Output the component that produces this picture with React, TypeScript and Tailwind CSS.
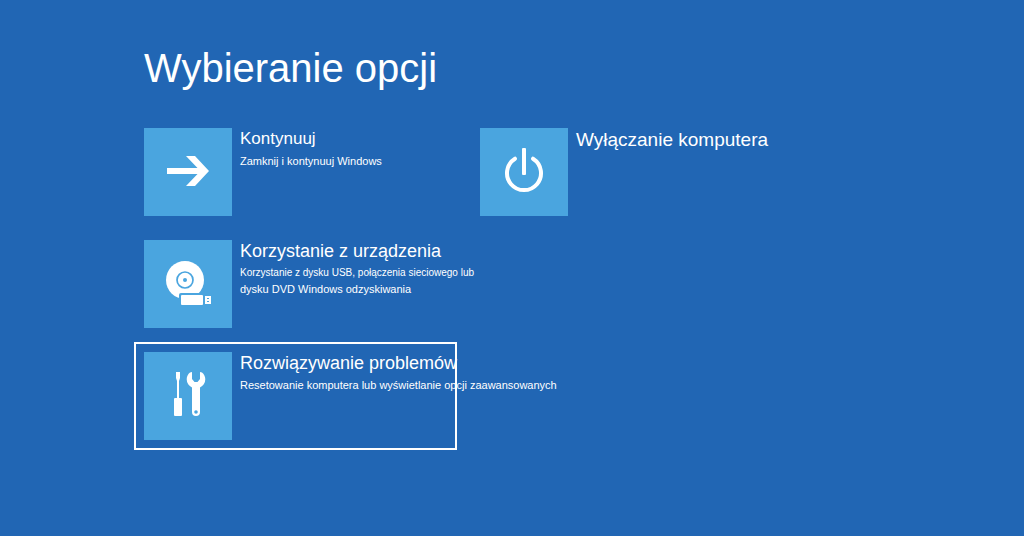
import type { ReactNode } from 'react';
import clsx from 'clsx';

const ArrowIcon = () => (
  <svg viewBox="0 0 88 88" className="size-full" fill="#fff" aria-hidden="true">
    <path d="M42 28h9l14 15-14 15h-9l11.5-12H23v-6h30.5z" />
  </svg>
);

const DeviceIcon = () => (
  <svg viewBox="0 0 88 88" className="size-full" aria-hidden="true">
    <circle cx="41" cy="40" r="19" fill="#fff" />
    <circle cx="41" cy="40" r="8" fill="none" stroke="#4aa5df" strokeWidth="1.7" />
    <circle cx="41" cy="40" r="2" fill="#4aa5df" />
    <path d="M37 53h24v14H35V55a2 2 0 0 1 2-2z" fill="#4aa5df" />
    <rect x="37" y="55" width="22" height="10" rx="1" fill="#fff" />
    <path d="M61 56h6v8h-6z" fill="#fff" />
    <path d="M63 58h2v1h-2zM63 61h2v1h-2z" fill="#4aa5df" />
  </svg>
);

const ToolsIcon = () => (
  <svg viewBox="0 0 88 88" className="size-full" fill="#fff" aria-hidden="true">
    <path d="M32 20h4v6l-1 3v17h-2V29l-1-3z" />
    <rect x="30" y="46" width="8" height="18" rx="1" />
    <path
      fillRule="evenodd"
      d="M46 20.500l2-.5v7l2.500 3h3l2.500-3v-7l2 .5c2 1.500 3.300 4 3.300 6.700 0 3.800-2.200 6.700-5.300 8.300V60a4 4 0 0 1-8 0V35.500c-3.100-1.600-5.300-4.500-5.300-8.300 0-2.700 1.300-5.200 3.300-6.700zM52 58.200a1.800 1.800 0 1 0 0 3.600 1.800 1.800 0 0 0 0-3.600z"
    />
  </svg>
);

const PowerIcon = () => (
  <svg viewBox="0 0 88 88" className="size-full" fill="none" stroke="#fff" strokeWidth="4" aria-hidden="true">
    <path strokeLinecap="round" d="M35 30.700a17 17 0 1 0 18 0" />
    <rect x="42" y="20" width="4" height="27" rx="1" fill="#fff" stroke="none" />
  </svg>
);

type OptionProps = {
  icon: ReactNode;
  title: string;
  titleClass: string;
  selected?: boolean;
  children?: ReactNode;
};

const Option = ({ icon, title, titleClass, selected, children }: OptionProps) => (
  <button
    type="button"
    className={clsx(
      'flex w-[303px] items-start gap-2 text-left',
      selected ? 'outline-2 outline-offset-8 outline-white' : 'outline-none'
    )}
  >
    <span className="size-[88px] shrink-0 bg-[#4aa5df]">{icon}</span>
    <span className="flex flex-col whitespace-nowrap">
      <span className={titleClass}>{title}</span>
      {children && <span className="mt-[3px] flex flex-col text-[11px] leading-4">{children}</span>}
    </span>
  </button>
);

const App = () => {
  return (
    <main className="min-h-screen bg-[#2166b4] px-36 pt-11 pb-24 font-['Liberation_Sans',Arial,sans-serif] text-white">
      <h1 className="text-[40px] leading-[48px]">Wybieranie opcji</h1>

      <div className="mt-9 flex flex-wrap items-start gap-x-[33px] gap-y-6">
        <div className="flex flex-col gap-6">
          <Option icon={<ArrowIcon />} title="Kontynuuj" titleClass="text-[17px] leading-[22px]">
            <span>Zamknij i kontynuuj Windows</span>
          </Option>
          <Option icon={<DeviceIcon />} title="Korzystanie z urządzenia" titleClass="text-[18px] leading-[22px]">
            <span className="text-[10px]">Korzystanie z dysku USB, połączenia sieciowego lub</span>
            <span>dysku DVD Windows odzyskiwania</span>
          </Option>
          <Option icon={<ToolsIcon />} title="Rozwiązywanie problemów" titleClass="text-[18px] leading-[22px]" selected>
            <span>Resetowanie komputera lub wyświetlanie opcji zaawansowanych</span>
          </Option>
        </div>

        <Option icon={<PowerIcon />} title="Wyłączanie komputera" titleClass="text-[19px] leading-6" />
      </div>
    </main>
  );
};

export default App;
